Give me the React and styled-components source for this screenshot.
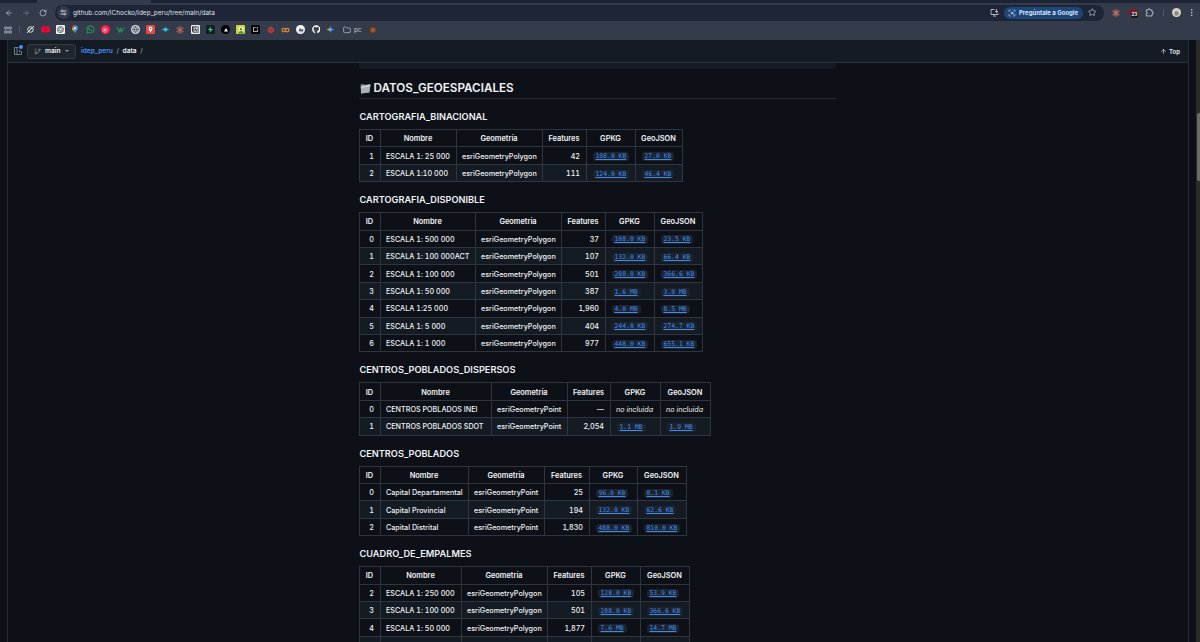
import React from 'react';
import styled, { createGlobalStyle } from 'styled-components';
import {
    ArrowLeft, ArrowRight, RotateCw, Star, MoreVertical, Globe, Folder,
    ArrowUp, GitBranch, ScanSearch,
} from 'lucide-react';
import { FaGithub, FaWhatsapp, FaYoutube } from 'react-icons/fa';
import { SiNotion, SiOpenai } from 'react-icons/si';

const TABLES = [
    {
        title: 'CARTOGRAFIA_BINACIONAL',
        columns: [21, 76, 86, 44, 49, 47],
        geometry: 'esriGeometryPolygon',
        rows: [
            ['1', 'ESCALA 1: 25 000', '42', '108.0 KB', '27.0 KB'],
            ['2', 'ESCALA 1:10 000', '111', '124.0 KB', '46.4 KB'],
        ],
    },
    {
        title: 'CARTOGRAFIA_DISPONIBLE',
        columns: [21, 95, 86, 44, 49, 48],
        geometry: 'esriGeometryPolygon',
        rows: [
            ['0', 'ESCALA 1: 500 000', '37', '108.0 KB', '23.5 KB'],
            ['1', 'ESCALA 1: 100 000ACT', '107', '132.0 KB', '66.4 KB'],
            ['2', 'ESCALA 1: 100 000', '501', '288.0 KB', '366.6 KB'],
            ['3', 'ESCALA 1: 50 000', '387', '1.6 MB', '3.0 MB'],
            ['4', 'ESCALA 1:25 000', '1,960', '4.0 MB', '8.5 MB'],
            ['5', 'ESCALA 1: 5 000', '404', '244.0 KB', '274.7 KB'],
            ['6', 'ESCALA 1: 1 000', '977', '448.0 KB', '655.1 KB'],
        ],
    },
    {
        title: 'CENTROS_POBLADOS_DISPERSOS',
        columns: [21, 111, 76, 43, 50, 50],
        geometry: 'esriGeometryPoint',
        rows: [
            ['0', 'CENTROS POBLADOS INEI', '—', null, null],
            ['1', 'CENTROS POBLADOS SDOT', '2,054', '1.1 MB', '1.9 MB'],
        ],
    },
    {
        title: 'CENTROS_POBLADOS',
        columns: [21, 88, 76, 45, 48, 49],
        geometry: 'esriGeometryPoint',
        rows: [
            ['0', 'Capital Departamental', '25', '96.0 KB', '8.1 KB'],
            ['1', 'Capital Provincial', '194', '132.0 KB', '62.6 KB'],
            ['2', 'Capital Distrital', '1,830', '488.0 KB', '810.0 KB'],
        ],
    },
    {
        title: 'CUADRO_DE_EMPALMES',
        columns: [21, 81, 86, 44, 49, 49],
        geometry: 'esriGeometryPolygon',
        rows: [
            ['2', 'ESCALA 1: 250 000', '105', '128.0 KB', '53.9 KB'],
            ['3', 'ESCALA 1: 100 000', '501', '288.0 KB', '366.6 KB'],
            ['4', 'ESCALA 1: 50 000', '1,877', '7.6 MB', '14.7 MB'],
            ['', '', '', '', ''],
        ],
    },
];

const Burst = ({ size = 8, color = '#d97560' }) => (
    <svg width={size} height={size} viewBox="0 0 16 16" stroke={color} strokeWidth="1.7" strokeLinecap="round">
        <path d="M8 1v14M1.500 5l13 6M1.500 11l13-6M4 2.500l8 11M12 2.500l-8 11" />
    </svg>
);

function BookmarkIcons() {
    return (
        <BookmarkList>
            <Tile>
                <svg width="9" height="9" viewBox="0 0 18 18" fill="none" stroke="#e6e9ee" strokeWidth="2">
                    <circle cx="9" cy="9" r="5.5" />
                    <path d="M2 16L16 2M8 9l3-3" />
                </svg>
            </Tile>
            <Tile><FaYoutube size={9} color="#ff0033" /></Tile>
            <Tile $bg="#f1f3f2" $color="#343a3c"><SiOpenai size={7} /></Tile>
            <Tile>
                <svg width="8" height="9" viewBox="0 0 16 18">
                    <path d="M8 17C7 13 2 11 2 6.5a6 6 0 0 1 6-6z" fill="#34a853" />
                    <path d="M8 17c1-4 6-6 6-10.5a6 6 0 0 0-6-6z" fill="#4285f4" />
                    <path d="M2 6.5a6 6 0 0 1 6-6v6z" fill="#ea4335" />
                    <path d="M2 7l6-1-4 6z" fill="#fbbc04" />
                    <circle cx="8" cy="6.5" r="2.3" fill="#e8eef4" />
                </svg>
            </Tile>
            <Tile $color="#20b85a"><FaWhatsapp size={9} /></Tile>
            <Tile $bg="#ff1744" $round>
                <svg width="8" height="8" viewBox="0 0 16 16">
                    <circle cx="8" cy="8" r="4.5" fill="none" stroke="#fff" />
                    <path d="M6.5 5.5v5L11 8z" fill="#fff" />
                </svg>
            </Tile>
            <Tile>
                <svg width="9" height="8" viewBox="0 0 18 16" fill="none" stroke="#21945a" strokeWidth="2.2">
                    <path d="M1 4h3l2 8 3-7 2 7 4-8h3" />
                </svg>
            </Tile>
            <Tile $bg="#d5dae1" $color="#343b48" $round><Globe size={7} /></Tile>
            <Tile $bg="#e5483e">
                <svg width="7" height="7" viewBox="0 0 14 14">
                    <path d="M7 13L3.5 7a4 4 0 1 1 7 0z" fill="#fff" />
                    <circle cx="7" cy="5" r="1.5" fill="#e5483e" />
                </svg>
            </Tile>
            <Tile>
                <svg width="9" height="7" viewBox="0 0 18 14">
                    <path d="M1 7l5-3 4-2 3 3 4 2-4 2-3 3-4-2z" fill="#2496c4" />
                    <circle cx="9" cy="7" r="2.2" fill="#5ed0e5" />
                </svg>
            </Tile>
            <Tile><Burst size={8} color="#c56a59" /></Tile>
            <Tile $bg="#eceef0" $color="#16181b"><SiNotion size={7} /></Tile>
            <Tile $bg="#10221f">
                <svg width="7" height="7" viewBox="0 0 14 14">
                    <path d="M8 1L2 8h4l-1 5 7-7H7z" fill="#3ecf8e" />
                </svg>
            </Tile>
            <Tile $bg="#000" $round>
                <svg width="6" height="6" viewBox="0 0 12 12"><path d="M6 2l4 7H2z" fill="#fff" /></svg>
            </Tile>
            <Tile $bg="#c9d437">
                <svg width="8" height="8" viewBox="0 0 16 16">
                    <path d="M3 2h10v9H3z" fill="#f5f4c4" />
                    <path d="M2 15l3-4 3-1 3 1 3 4z" fill="#4c8b3c" />
                    <circle cx="8" cy="6.5" r="2.3" fill="#477f35" />
                </svg>
            </Tile>
            <Tile $bg="#050505">
                <svg width="7" height="7" viewBox="0 0 14 14" fill="none" stroke="#e7e7e7" strokeWidth="1.5">
                    <path d="M7 3H3v8h8V7M9 3h2v2" />
                </svg>
            </Tile>
            <Tile>
                <svg width="8" height="8" viewBox="0 0 18 18">
                    <path d="M9 1l7 4v8l-7 4-7-4V5z" fill="#ad3d3f" />
                    <path d="M3 6l6 3 6-3M4 12l5-3 5 3" fill="none" stroke="#74282c" />
                </svg>
            </Tile>
            <Tile>
                <svg width="9" height="8" viewBox="0 0 18 16" fill="none" stroke="#d98a2f" strokeWidth="2.5">
                    <circle cx="5.5" cy="8" r="3.5" />
                    <circle cx="12.5" cy="8" r="3.5" />
                </svg>
            </Tile>
            <Tile $bg="#f3f4f5" $round>
                <svg width="8" height="8" viewBox="0 0 16 16">
                    <path d="M3 10l3-6 3 3 4-1-1 5H8z" fill="#56606a" />
                    <path d="M4 12h8" stroke="#7e8790" />
                </svg>
            </Tile>
            <Tile><FaGithub size={8.5} /></Tile>
            <Tile>
                <svg width="9" height="9" viewBox="0 0 18 18">
                    <path d="M9 1c.5 5 3 7.500 8 8-5 .5-7.500 3-8 8-.5-5-3-7.500-8-8 5-.5 7.500-3 8-8z" fill="#4c8df6" />
                    <path d="M1 9c3-.3 5.500-1.500 6.700-3.500L9 9l-2 3.500C5.500 10.300 4 9.300 1 9z" fill="#d8ac48" />
                </svg>
            </Tile>
        </BookmarkList>
    );
}

function Browser() {
    return (
        <>
            <TabStrip />
            <Toolbar>
                <NavButtons>
                    <ArrowLeft size={8} />
                    <Dim><ArrowRight size={8} /></Dim>
                    <RotateCw size={8} />
                </NavButtons>
                <AddressBar>
                    <SiteInfo>
                        <svg width="7" height="7" viewBox="0 0 14 14" fill="none" stroke="#dfe3ea" strokeWidth="1.7">
                            <path d="M1 4h2M8 4h5M1 10h5M11 10h2" />
                            <circle cx="5" cy="4" r="1.8" />
                            <circle cx="9" cy="10" r="1.8" />
                        </svg>
                    </SiteInfo>
                    <Url>github.com/iChocko/idep_peru/tree/main/data</Url>
                    <svg width="9" height="9" viewBox="0 0 18 18" fill="none" stroke="#c5cad4" strokeWidth="1.7">
                        <path d="M9 3H2v10h14v-3M6 16h6M13 2v7M10 6l3 3 3-3" />
                    </svg>
                    <AskPill><ScanSearch size={8} />Pregúntale a Google</AskPill>
                    <Star size={8.5} />
                </AddressBar>
                <Extensions>
                    <Burst size={8} />
                    <Blocker><Count>23</Count></Blocker>
                    <svg width="9" height="9" viewBox="0 0 18 18" fill="none" stroke="#b7bdc9" strokeWidth="1.8" strokeLinejoin="round">
                        <path d="M2.500 4H6V2h4v2h4v4h2v4h-2v4H2.500v-4H4V8H2.500z" />
                    </svg>
                    <Divider />
                    <Avatar />
                </Extensions>
                <MoreVertical size={9} />
            </Toolbar>
            <Bookmarks>
                <Apps>
                    <svg width="8" height="8" viewBox="0 0 16 16" fill="none" stroke="#b7bdc9" strokeWidth="1.6">
                        <path d="M1.500 2h5v4h-5zM9.500 2h5v4h-5zM1.500 10h5v4h-5zM9.500 10h5v4h-5z" />
                    </svg>
                </Apps>
                <Divider />
                <BookmarkIcons />
                <FolderItem><Folder size={8} />pc</FolderItem>
                <Tile $bg="#4a3530" $round><Burst size={6} color="#c66a45" /></Tile>
            </Bookmarks>
        </>
    );
}

function FileCell({ size }) {
    if (size === '') {
        return <Cell />;
    }
    return <Cell>{size ? <FileLink>{size}</FileLink> : <em>no incluida</em>}</Cell>;
}

function DataTable({ columns, geometry, rows }) {
    return (
        <Table>
            <Row $columns={columns}>
                <HeadCell>ID</HeadCell>
                <HeadCell>Nombre</HeadCell>
                <HeadCell>Geometría</HeadCell>
                <HeadCell>Features</HeadCell>
                <HeadCell>GPKG</HeadCell>
                <HeadCell>GeoJSON</HeadCell>
            </Row>
            {rows.map(([id, name, features, gpkg, geojson], i) => (
                <Row key={id} $columns={columns} $striped={i % 2 === 1}>
                    <Cell $align="flex-end">{id}</Cell>
                    <Cell>{name}</Cell>
                    <Cell>{name && geometry}</Cell>
                    <Cell $align="flex-end">{features}</Cell>
                    <FileCell size={gpkg} />
                    <FileCell size={geojson} />
                </Row>
            ))}
        </Table>
    );
}

export default function App() {
    return (
        <Page>
            <GlobalStyle />
            <Browser />
            <Viewport>
                <Gutter />
                <Content>
                    <RepoBar>
                        <TreeToggle>
                            <svg width="10" height="10" viewBox="0 0 20 20" fill="none" stroke="#9198a1" strokeWidth="1.5">
                                <path d="M11 3H3v14h14v-7M8 3v14M12 8l3 2-3 2" />
                            </svg>
                            <Dot />
                        </TreeToggle>
                        <BranchButton><GitBranch size={7} />main<Caret /></BranchButton>
                        <Crumb $link>idep_peru</Crumb>
                        <Slash>/</Slash>
                        <Crumb>data</Crumb>
                        <Slash>/</Slash>
                        <TopLink><ArrowUp size={7} />Top</TopLink>
                    </RepoBar>
                    <Readme>
                        <CodeBlockEnd />
                        <Heading>
                            <svg width="11" height="11" viewBox="0 0 22 22">
                                <path d="M1 3l7-1 2 2 9-2-1 17-16 2z" fill="#7f878c" />
                                <path d="M2 7l19-4-2 16-17 2z" fill="#aab1b5" />
                                <path d="M2 7l19-4-.5 3L2 10z" fill="#d5d9db" />
                            </svg>
                            DATOS_GEOESPACIALES
                        </Heading>
                        {TABLES.map((table) => (
                            <Section key={table.title}>
                                <SubHeading>{table.title}</SubHeading>
                                <DataTable {...table} />
                            </Section>
                        ))}
                    </Readme>
                </Content>
                <Gutter />
                <Scrollbar><Thumb /></Scrollbar>
            </Viewport>
        </Page>
    );
}

const GlobalStyle = createGlobalStyle`
    body {
        margin: 0;
        background: #0d1017;
        overflow: hidden;
    }
    * {
        box-sizing: border-box;
    }
    svg {
        flex: none;
        display: block;
    }
`;

const Page = styled.div`
    display: flex;
    flex-direction: column;
    width: 1200px;
    height: 642px;
    overflow: hidden;
    font-family: Inter, "Liberation Sans", sans-serif;
    font-size: 7.5px;
    color: #f0f3f6;
`;

const TabStrip = styled.div`
    height: 3px;
    flex: none;
    background: linear-gradient(90deg, #1c2334 0 37px, #343c4c 37px 151px, #1c2334 151px);
`;

const Toolbar = styled.div`
    display: flex;
    align-items: center;
    flex: none;
    height: 19px;
    background: #343c4c;
    color: #c5cad4;
`;

const NavButtons = styled.div`
    display: flex;
    gap: 9px;
    width: 55px;
    padding-left: 5px;
`;

const Dim = styled.span`
    opacity: 0.45;
`;

const AddressBar = styled.div`
    display: flex;
    align-items: center;
    width: 1049px;
    height: 16px;
    padding: 0 8px 0 2px;
    border-radius: 8px;
    background: #1d2536;
`;

const SiteInfo = styled.div`
    display: flex;
    align-items: center;
    justify-content: center;
    width: 13px;
    height: 13px;
    margin-right: 3px;
    border-radius: 50%;
    background: #323a4b;
`;

const Url = styled.div`
    flex: 1;
    font-size: 6.5px;
    color: #dfe3ea;
`;

const AskPill = styled.div`
    display: flex;
    align-items: center;
    justify-content: center;
    gap: 3px;
    width: 79px;
    height: 12px;
    margin: 0 5px;
    border-radius: 6px;
    background: #1e4679;
    color: #d5e5fb;
    font-size: 6px;
    font-weight: 700;
    white-space: nowrap;
`;

const Extensions = styled.div`
    display: flex;
    align-items: center;
    gap: 8.5px;
    padding: 0 6px 0 8px;
`;

const Blocker = styled.div`
    position: relative;
    width: 8px;
    height: 8px;
    border-radius: 3px;
    background: #8e1528;
`;

const Count = styled.span`
    position: absolute;
    left: 2px;
    top: 3px;
    padding: 0 1px;
    border-radius: 1px;
    background: #1a1b20;
    color: #fff;
    font-size: 4.5px;
    font-weight: 700;
    line-height: 6px;
`;

const Divider = styled.div`
    width: 1px;
    height: 7px;
    background: #515a6b;
`;

const Avatar = styled.div`
    width: 9px;
    height: 9px;
    border-radius: 50%;
    background: radial-gradient(circle at 50% 60%, #8c8878 0 20%, #d8d8d0 45%, #b9bab6);
`;

const Bookmarks = styled.div`
    display: flex;
    align-items: center;
    flex: none;
    height: 18px;
    padding: 0 0 3px 4px;
    background: #343c4c;
`;

const Apps = styled.div`
    width: 15px;
`;

const BookmarkList = styled.div`
    display: flex;
    gap: 6.06px;
    margin-left: 5.5px;
`;

const Tile = styled.div`
    display: flex;
    align-items: center;
    justify-content: center;
    width: 9px;
    height: 9px;
    flex: none;
    border-radius: ${({ $round }) => ($round ? '50%' : '1px')};
    background: ${({ $bg }) => $bg || 'transparent'};
    color: ${({ $color }) => $color || '#fff'};
`;

const FolderItem = styled.div`
    display: flex;
    align-items: center;
    gap: 3px;
    margin: 0 7px 0 7.5px;
    font-size: 6.3px;
    color: #c5cad4;
`;

const Viewport = styled.div`
    display: flex;
    flex: 1;
    min-height: 0;
`;

const Gutter = styled.div`
    width: 7px;
    flex: none;
    background: #0d1017;
`;

const Content = styled.div`
    flex: 1;
    border: 1px solid #262c34;
    border-width: 0 1px;
`;

const Scrollbar = styled.div`
    width: 4px;
    flex: none;
    padding: 73px 0 0 1px;
    background: #2b2b2c;
`;

const Thumb = styled.div`
    height: 68px;
    border-radius: 2px 0 0 2px;
    background: #6b6b6b;
`;

const RepoBar = styled.div`
    display: flex;
    align-items: center;
    height: 23px;
    padding: 0 8px 0 5px;
    border-bottom: 1px solid #2c323a;
    background: #151b23;
    font-size: 6.6px;
`;

const TreeToggle = styled.div`
    position: relative;
    width: 14px;
`;

const Dot = styled.span`
    position: absolute;
    left: 6px;
    top: -1px;
    width: 4px;
    height: 4px;
    border-radius: 50%;
    background: #4493f8;
`;

const BranchButton = styled.div`
    display: flex;
    align-items: center;
    gap: 4px;
    width: 49px;
    height: 15px;
    margin-right: 5px;
    padding: 0 6px;
    border: 1px solid #343b44;
    border-radius: 3px;
    background: #20262e;
    font-weight: 600;
    color: #f0f3f6;

    svg {
        color: #9198a1;
    }
`;

const Caret = styled.span`
    margin-left: auto;
    border: 2px solid transparent;
    border-top-color: #9198a1;
    border-bottom: 0;
`;

const Crumb = styled.span`
    font-weight: 600;
    color: ${({ $link }) => ($link ? '#4493f8' : '#f0f3f6')};
`;

const Slash = styled.span`
    margin: 0 3.7px;
    color: #b3bac2;
`;

const TopLink = styled.div`
    display: flex;
    align-items: center;
    gap: 2px;
    margin-left: auto;
    font-size: 6px;
    font-weight: 600;
`;

const Readme = styled.div`
    width: 477px;
    margin-left: 351px;
`;

const CodeBlockEnd = styled.div`
    height: 6px;
    border-radius: 0 0 3px 3px;
    background: #151b23;
`;

const Heading = styled.div`
    display: flex;
    align-items: center;
    gap: 3px;
    height: 30px;
    padding: 9.5px 0 0 0.5px;
    border-bottom: 1px solid #272c34;
    font-size: 11.7px;
    font-weight: 600;
    line-height: 14px;
`;

const Section = styled.div`
    padding-top: 12px;
`;

const SubHeading = styled.div`
    margin-bottom: 6.4px;
    padding-left: 0.5px;
    font-size: 9.2px;
    font-weight: 600;
    line-height: 11.6px;
`;

const Table = styled.div`
    width: max-content;
    border: 1px solid #30363f;
    border-width: 1px 0 0 1px;
    font-size: 7.2px;
    font-weight: 450;
    font-variant-numeric: tabular-nums;
`;

const Row = styled.div`
    display: grid;
    grid-template-columns: ${({ $columns }) => $columns.map((w) => `${w}px`).join(' ')};
    height: 17.42px;
    background: ${({ $striped }) => ($striped ? '#151b23' : 'transparent')};
`;

const Cell = styled.div`
    display: flex;
    align-items: center;
    justify-content: ${({ $align }) => $align || 'flex-start'};
    padding: 1px 6px 0 5px;
    border: 1px solid #30363f;
    border-width: 0 1px 1px 0;
    white-space: nowrap;
`;

const HeadCell = styled(Cell)`
    justify-content: center;
    font-size: 7.4px;
    font-weight: 600;
`;

const FileLink = styled.a`
    padding: 0 3px;
    margin: 1px 0 0 0.5px;
    border-radius: 3px;
    background: #1b2430;
    color: #4089e6;
    font-family: "DejaVu Sans Mono", monospace;
    font-size: 6.4px;
    line-height: 9px;
    text-decoration: underline;
`;
